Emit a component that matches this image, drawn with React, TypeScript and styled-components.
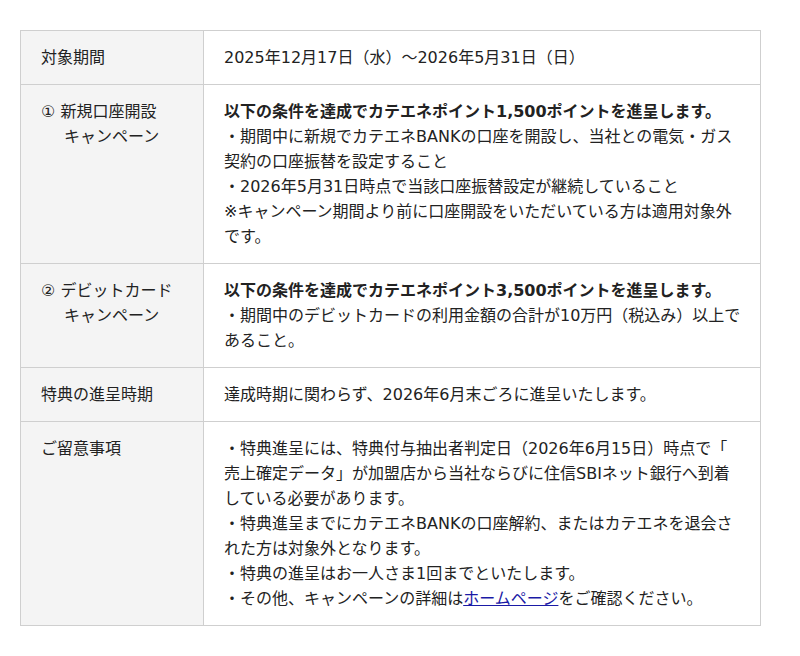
import React, { FC } from "react";
import styled, { createGlobalStyle } from "styled-components";

const GlobalStyle = createGlobalStyle`
  html, body {
    margin: 0;
    padding: 0;
    background: #fff;
  }
  body {
    font-family: "DejaVu Sans", "Noto Sans CJK JP", sans-serif;
    color: #222;
  }
`;

const Page = styled.div`
  padding: 30px 39px 30px 20px;
`;

const Table = styled.table`
  width: 100%;
  border-collapse: collapse;
  font-family: "DejaVu Sans", "Noto Sans CJK JP", sans-serif;
  font-size: 16px;
  line-height: 25px;
  color: #222;
`;

const Th = styled.th`
  width: 142px;
  padding: 14px 20px;
  background: #f4f4f4;
  border: 1px solid #cfcfcf;
  text-align: left;
  vertical-align: top;
  font-weight: normal;
`;

const Td = styled.td`
  padding: 14px 16px 14px 20px;
  border: 1px solid #cfcfcf;
  vertical-align: top;
`;

const Hanging = styled.div`
  padding-left: 23px;
  text-indent: -23px;
`;

const Lead = styled.p`
  margin: 0;
  font-weight: bold;
`;

const Line = styled.p`
  margin: 0;
`;

const Link = styled.a`
  color: #1a1aa6;
  text-decoration: underline;
`;

interface Row {
  label: React.ReactNode;
  body: React.ReactNode;
}

const rows: Row[] = [
  {
    label: "対象期間",
    body: <Line>2025年12月17日（水）～2026年5月31日（日）</Line>,
  },
  {
    label: (
      <Hanging>
        ① 新規口座開設
        <br />
        キャンペーン
      </Hanging>
    ),
    body: (
      <>
        <Lead>以下の条件を達成でカテエネポイント1,500ポイントを進呈します。</Lead>
        <Line>
          ・期間中に新規でカテエネBANKの口座を開設し、当社との電気・ガス契約の口座振替を設定すること
        </Line>
        <Line>・2026年5月31日時点で当該口座振替設定が継続していること</Line>
        <Line>
          ※キャンペーン期間より前に口座開設をいただいている方は適用対象外です。
        </Line>
      </>
    ),
  },
  {
    label: (
      <Hanging>
        ② デビットカード
        <br />
        キャンペーン
      </Hanging>
    ),
    body: (
      <>
        <Lead>以下の条件を達成でカテエネポイント3,500ポイントを進呈します。</Lead>
        <Line>
          ・期間中のデビットカードの利用金額の合計が10万円（税込み）以上であること。
        </Line>
      </>
    ),
  },
  {
    label: "特典の進呈時期",
    body: <Line>達成時期に関わらず、2026年6月末ごろに進呈いたします。</Line>,
  },
  {
    label: "ご留意事項",
    body: (
      <>
        <Line>
          ・特典進呈には、特典付与抽出者判定日（2026年6月15日）時点で「
          <br />
          売上確定データ」が加盟店から当社ならびに住信SBIネット銀行へ到着している必要があります。
        </Line>
        <Line>
          ・特典進呈までにカテエネBANKの口座解約、またはカテエネを退会された方は対象外となります。
        </Line>
        <Line>・特典の進呈はお一人さま1回までといたします。</Line>
        <Line>
          ・その他、キャンペーンの詳細は<Link href="#">ホームページ</Link>をご確認ください。
        </Line>
      </>
    ),
  },
];

const App: FC = () => {
  return (
    <Page>
      <GlobalStyle />
      <Table>
        <tbody>
          {rows.map((row, i) => (
            <tr key={i}>
              <Th>{row.label}</Th>
              <Td>{row.body}</Td>
            </tr>
          ))}
        </tbody>
      </Table>
    </Page>
  );
};

export default App;
